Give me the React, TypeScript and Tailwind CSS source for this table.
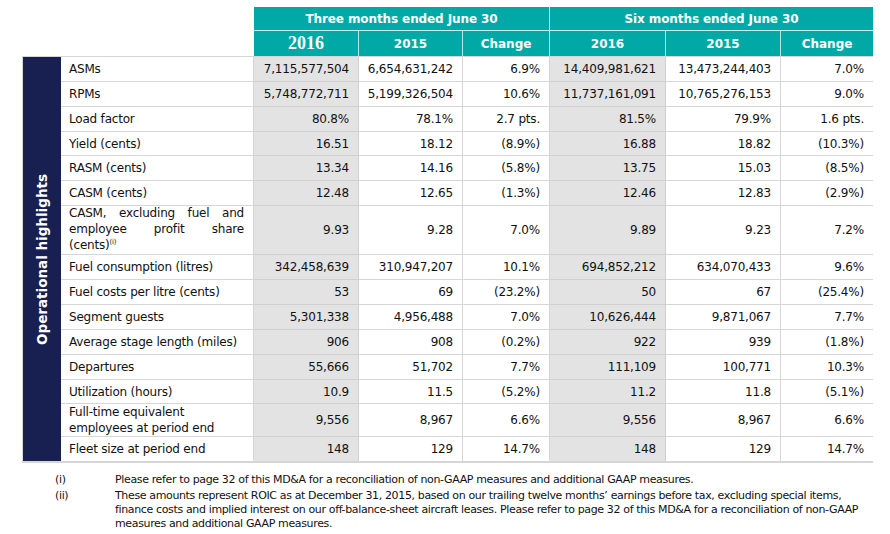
import React from "react";

type Row = { label: React.ReactNode; v: string[]; h: string };

const rows: Row[] = [
  { label: "ASMs", v: ["7,115,577,504", "6,654,631,242", "6.9%", "14,409,981,621", "13,473,244,403", "7.0%"], h: "h-[25px]" },
  { label: "RPMs", v: ["5,748,772,711", "5,199,326,504", "10.6%", "11,737,161,091", "10,765,276,153", "9.0%"], h: "h-[25px]" },
  { label: "Load factor", v: ["80.8%", "78.1%", "2.7 pts.", "81.5%", "79.9%", "1.6 pts."], h: "h-[25px]" },
  { label: "Yield (cents)", v: ["16.51", "18.12", "(8.9%)", "16.88", "18.82", "(10.3%)"], h: "h-[24px]" },
  { label: "RASM (cents)", v: ["13.34", "14.16", "(5.8%)", "13.75", "15.03", "(8.5%)"], h: "h-[25px]" },
  { label: "CASM (cents)", v: ["12.48", "12.65", "(1.3%)", "12.46", "12.83", "(2.9%)"], h: "h-[25px]" },
  {
    label: (
      <div className="flex w-full flex-col leading-[16px]">
        <div className="flex justify-between">
          <span>CASM,</span>
          <span>excluding</span>
          <span>fuel</span>
          <span>and</span>
        </div>
        <div className="flex justify-between">
          <span>employee</span>
          <span>profit</span>
          <span>share</span>
        </div>
        <div>
          (cents)<span className="relative -top-[5px] text-[7px]">(i)</span>
        </div>
      </div>
    ),
    v: ["9.93", "9.28", "7.0%", "9.89", "9.23", "7.2%"],
    h: "h-[49px]",
  },
  { label: "Fuel consumption (litres)", v: ["342,458,639", "310,947,207", "10.1%", "694,852,212", "634,070,433", "9.6%"], h: "h-[25px]" },
  { label: "Fuel costs per litre (cents)", v: ["53", "69", "(23.2%)", "50", "67", "(25.4%)"], h: "h-[25px]" },
  { label: "Segment guests", v: ["5,301,338", "4,956,488", "7.0%", "10,626,444", "9,871,067", "7.7%"], h: "h-[25px]" },
  { label: "Average stage length (miles)", v: ["906", "908", "(0.2%)", "922", "939", "(1.8%)"], h: "h-[25px]" },
  { label: "Departures", v: ["55,666", "51,702", "7.7%", "111,109", "100,771", "10.3%"], h: "h-[25px]" },
  { label: "Utilization (hours)", v: ["10.9", "11.5", "(5.2%)", "11.2", "11.8", "(5.1%)"], h: "h-[24px]" },
  {
    label: (
      <div className="leading-[16px]">
        Full-time equivalent
        <br />
        employees at period end
      </div>
    ),
    v: ["9,556", "8,967", "6.6%", "9,556", "8,967", "6.6%"],
    h: "h-[33px]",
  },
  { label: "Fleet size at period end", v: ["148", "129", "14.7%", "148", "129", "14.7%"], h: "h-[24px]" },
];

const colW = ["w-[105px]", "w-[104px]", "w-[87px]", "w-[116px]", "w-[115px]", "w-[92px]"];

export default function App() {
  return (
    <div
      className="relative h-[534px] w-[890px] bg-white text-[#111]"
      style={{ fontFamily: '"DejaVu Sans", Verdana, sans-serif' }}
    >
      <div className="pt-[7px]">
        {/* Header */}
        <div className="ml-[254px] flex w-[619px] flex-col bg-[#00a9a5] font-bold text-white">
          <div className="flex h-[24px] border-b border-white/80 text-[12px] tracking-[-0.1px]">
            <div className="flex w-[296px] items-center justify-center border-r border-white/80">
              Three months ended June 30
            </div>
            <div className="flex flex-1 items-center justify-center">Six months ended June 30</div>
          </div>
          <div className="flex h-[25px] text-[12px]">
            <div
              className="flex w-[105px] items-center justify-center border-r border-white/70 text-[18px]"
              style={{ fontFamily: '"Liberation Serif", serif' }}
            >
              2016
            </div>
            <div className="flex w-[104px] items-center justify-center border-r border-white/70">2015</div>
            <div className="flex w-[87px] items-center justify-center border-r border-white/80">Change</div>
            <div className="flex w-[116px] items-center justify-center border-r border-white/70">2016</div>
            <div className="flex w-[115px] items-center justify-center border-r border-white/70">2015</div>
            <div className="flex w-[92px] items-center justify-center">Change</div>
          </div>
        </div>

        {/* Body */}
        <div className="ml-[22px] flex w-[851px] border-b-2 border-l border-t border-[#d6d6d6] text-[12px] tracking-[-0.2px]">
          <div className="flex w-[38px] items-center justify-center bg-[#172051]">
            <span className="rotate-180 text-[13.5px] font-bold tracking-normal text-white [writing-mode:vertical-rl]">
              Operational highlights
            </span>
          </div>
          <div className="flex flex-1 flex-col">
            {rows.map((r, i) => (
              <div key={i} className={`flex ${r.h}`}>
                <div
                  className={`flex w-[193px] items-center border-r border-[#d6d6d6] pl-[8px] pr-[9px] ${
                    i < rows.length - 1 ? "border-b" : ""
                  }`}
                >
                  {r.label}
                </div>
                {r.v.map((val, j) => (
                  <div
                    key={j}
                    className={`flex ${colW[j]} items-center justify-end pr-[9px] ${
                      j === 0 || j === 3 ? "bg-[#e3e3e3] border-[#d0d0d0]" : "border-[#d6d6d6]"
                    } ${j < 5 ? "border-r" : ""} ${i < rows.length - 1 ? "border-b" : ""}`}
                  >
                    {val}
                  </div>
                ))}
              </div>
            ))}
          </div>
        </div>

        {/* Footnotes */}
        <div className="mt-[10px] text-[11px] leading-[14px] tracking-[-0.36px]">
          <div className="flex">
            <div className="w-[115px] pl-[55px]">(i)</div>
            <div className="whitespace-nowrap">
              Please refer to page 32 of this MD&amp;A for a reconciliation of non-GAAP measures and additional GAAP measures.
            </div>
          </div>
          <div className="mt-[2px] flex">
            <div className="w-[115px] pl-[55px]">(ii)</div>
            <div className="whitespace-nowrap">
              These amounts represent ROIC as at December 31, 2015, based on our trailing twelve months’ earnings before tax, excluding special items,
              <br />
              finance costs and implied interest on our off-balance-sheet aircraft leases. Please refer to page 32 of this MD&amp;A for a reconciliation of non-GAAP
              <br />
              measures and additional GAAP measures.
            </div>
          </div>
        </div>
      </div>
    </div>
  );
}
